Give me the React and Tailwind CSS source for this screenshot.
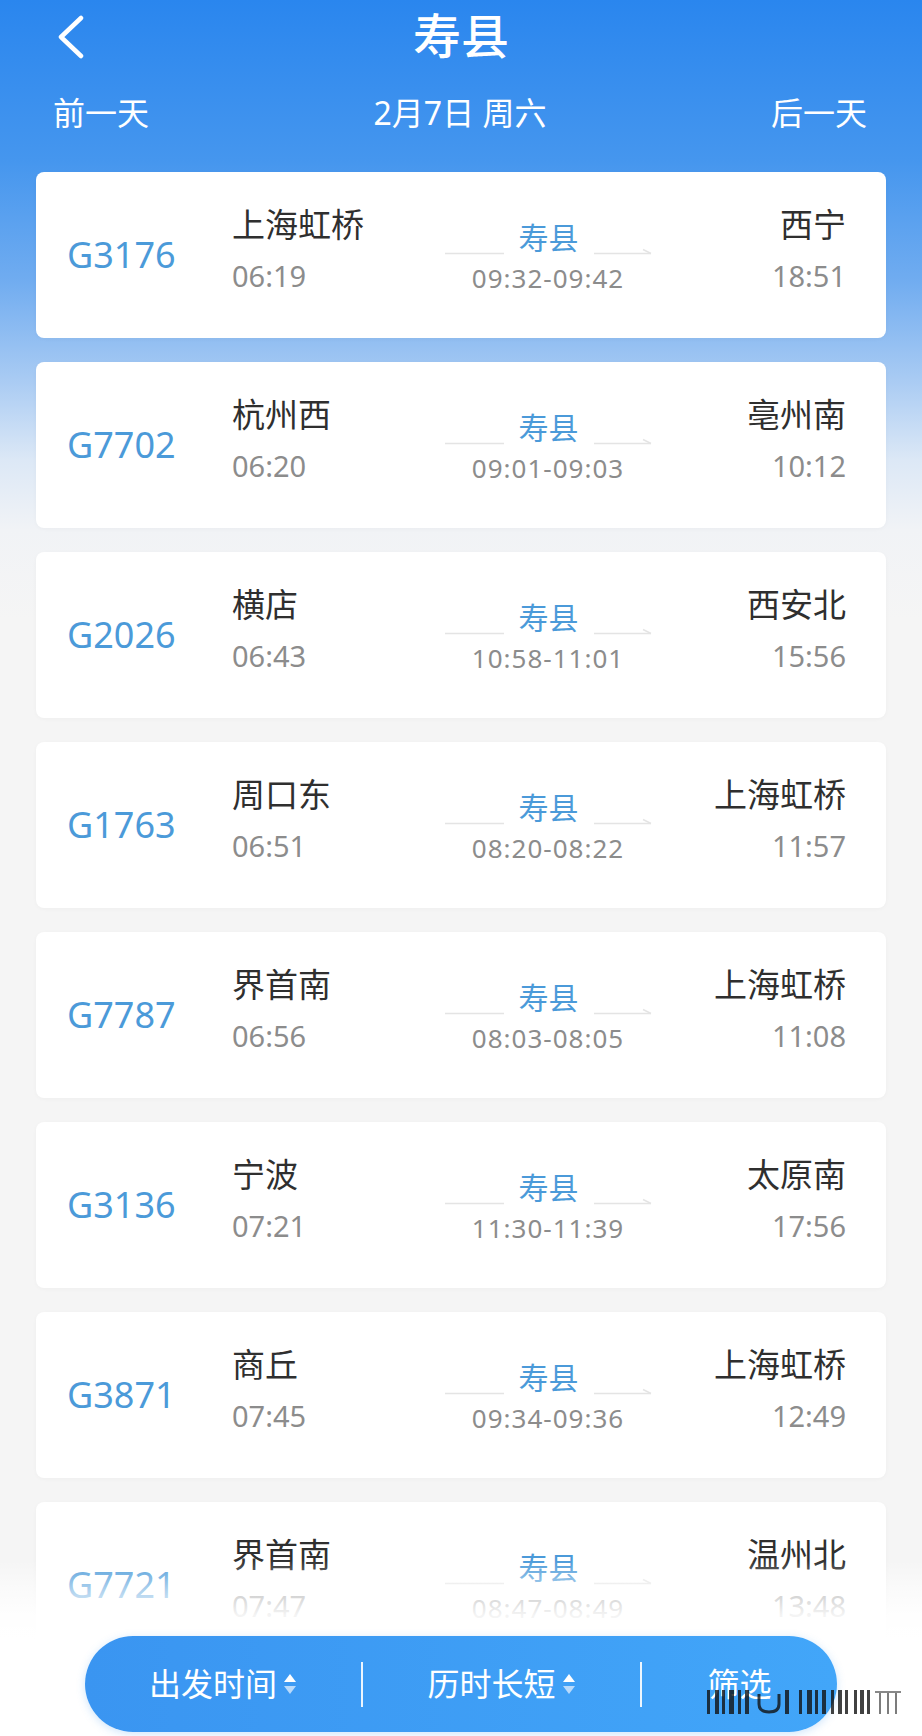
import React from "react";

const trains = [
  ["G3176", "上海虹桥", "06:19", "09:32-09:42", "西宁", "18:51"],
  ["G7702", "杭州西", "06:20", "09:01-09:03", "亳州南", "10:12"],
  ["G2026", "横店", "06:43", "10:58-11:01", "西安北", "15:56"],
  ["G1763", "周口东", "06:51", "08:20-08:22", "上海虹桥", "11:57"],
  ["G7787", "界首南", "06:56", "08:03-08:05", "上海虹桥", "11:08"],
  ["G3136", "宁波", "07:21", "11:30-11:39", "太原南", "17:56"],
  ["G3871", "商丘", "07:45", "09:34-09:36", "上海虹桥", "12:49"],
  ["G7721", "界首南", "07:47", "08:47-08:49", "温州北", "13:48"],
];

function LeftLine() {
  return (
    <svg width="59" height="40" viewBox="0 0 59 40" className="shrink-0">
      <line x1="0" y1="35.5" x2="59" y2="35.5" stroke="#e4e4e4" strokeWidth="1.5" />
    </svg>
  );
}

function RightArrow() {
  return (
    <svg width="58" height="40" viewBox="0 0 58 40" className="shrink-0">
      <line x1="0" y1="35.5" x2="57" y2="35.5" stroke="#e4e4e4" strokeWidth="1.5" />
      <line x1="57" y1="35.5" x2="49" y2="31.5" stroke="#e4e4e4" strokeWidth="1.5" />
    </svg>
  );
}

function SortIcon() {
  return (
    <svg width="14" height="26" viewBox="0 0 14 26" className="ml-[6px]">
      <polygon points="7,3 13,11 1,11" fill="#ffffff" />
      <polygon points="7,23 13,15 1,15" fill="#b9dafb" />
    </svg>
  );
}

function Card({ t }) {
  const [no, from, dep, stop, to, arr] = t;
  return (
    <div className="flex h-[166px] items-start rounded-[8px] bg-white pl-[31px] pr-[40px] shadow-[0_1px_4px_rgba(0,0,0,0.03)]">
      <div className="flex h-full w-[165px] shrink-0 items-center text-[36px] leading-none text-[#4b9ad9]">
        {no}
      </div>
      <div className="flex w-[200px] shrink-0 flex-col pt-[33px]">
        <div className="text-[33px] leading-[40px] text-[#2f2f2f]">{from}</div>
        <div className="mt-[13px] text-[29px] leading-[36px] text-[#8c8c8c]">{dep}</div>
      </div>
      <div className="flex w-[232px] shrink-0 flex-col items-center pt-[46px]">
        <div className="flex items-center gap-[15px]">
          <LeftLine />
          <div className="text-[30px] leading-[40px] text-[#4b9ad9]">寿县</div>
          <RightArrow />
        </div>
        <div className="mt-[2px] text-[26px] leading-[36px] tracking-[1px] text-[#8c8c8c]">{stop}</div>
      </div>
      <div className="flex flex-1 flex-col items-end pt-[33px]">
        <div className="text-[33px] leading-[40px] text-[#2f2f2f]">{to}</div>
        <div className="mt-[13px] text-[29px] leading-[36px] text-[#8c8c8c]">{arr}</div>
      </div>
    </div>
  );
}

function Watermark() {
  const bars = [
    [0, 3], [8, 4], [15, 3], [22, 5], [31, 3], [38, 4],
    [92, 3], [100, 5], [108, 3], [115, 4], [124, 3], [131, 4], [138, 3],
    [147, 3], [153, 4], [160, 3], [172, 2], [180, 2], [188, 2],
  ];
  return (
    <svg width="196" height="28" viewBox="0 0 196 28" className="blur-[0.6px]">
      {bars.map(([x, w], i) => (
        <rect key={i} x={x} y={i > 15 ? 5 : 2} width={w} height={i > 15 ? 21 : 24} fill="#111" opacity={i > 15 ? 0.55 : 0.8} />
      ))}
      <path d="M52 6 V16 Q52 24 62 24 Q72 24 72 16 V6" fill="none" stroke="#111" strokeWidth="3" opacity="0.8" />
      <rect x="78" y="2" width="4" height="24" fill="#111" opacity="0.8" />
      <rect x="168" y="3" width="26" height="2" fill="#111" opacity="0.5" />
    </svg>
  );
}

export default function App() {
  return (
    <div className="relative h-[1736px] w-[922px] overflow-hidden bg-[linear-gradient(180deg,#2a86ee_0px,#4596ee_160px,#70acf0_280px,#a9cbf3_380px,#dce8f6_460px,#f1f3f6_530px,#f5f5f5_620px,#f5f5f5_100%)] font-['Noto_Sans','Noto_Sans_CJK_SC',sans-serif]">
      {/* header */}
      <div className="relative flex h-[72px] items-center justify-center">
        <svg width="30" height="44" viewBox="0 0 30 44" className="absolute left-[56px] top-[15px]">
          <polyline points="25,3 5,22 25,41" fill="none" stroke="#ffffff" strokeWidth="4.5" strokeLinecap="round" strokeLinejoin="round" />
        </svg>
        <div className="text-[48px] font-medium leading-none text-white">寿县</div>
      </div>
      <div className="flex h-[82px] items-center justify-between pl-[53px] pr-[55px] text-[32px] leading-none text-white">
        <span>前一天</span>
        <span>2月7日 周六</span>
        <span>后一天</span>
      </div>

      {/* list */}
      <div className="flex flex-col gap-[24px] px-[36px] pt-[18px]">
        {trains.map((t) => (
          <Card key={t[0]} t={t} />
        ))}
      </div>

      {/* fade */}
      <div className="pointer-events-none absolute inset-x-0 top-[1560px] h-[176px] bg-[linear-gradient(180deg,rgba(255,255,255,0)_0px,rgba(255,255,255,0.55)_30px,rgba(255,255,255,0.9)_55px,#ffffff_80px)]" />

      {/* bottom bar */}
      <div className="absolute bottom-[4px] left-[85px] flex h-[96px] w-[752px] items-center rounded-full bg-[linear-gradient(90deg,#3a95f1,#42a6f9)] text-[32px] leading-none text-white shadow-[0_2px_8px_rgba(60,150,240,0.25)]">
        <div className="flex w-[276px] items-center justify-center">
          <span>出发时间</span>
          <SortIcon />
        </div>
        <div className="h-[45px] w-[2px] bg-white/90" />
        <div className="flex w-[277px] items-center justify-center">
          <span>历时长短</span>
          <SortIcon />
        </div>
        <div className="h-[45px] w-[2px] bg-white/90" />
        <div className="flex flex-1 items-center justify-center">
          <span>筛选</span>
        </div>
      </div>
      <div className="absolute left-[707px] top-[1688px]">
        <Watermark />
      </div>
    </div>
  );
}
